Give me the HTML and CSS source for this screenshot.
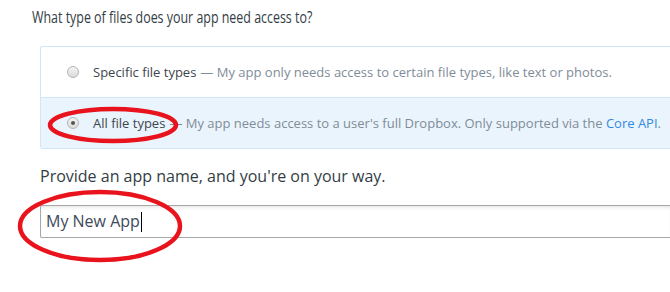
FILE: index.html
```html
<!DOCTYPE html>
<html lang="en">
<head>
  <meta charset="UTF-8" />
  <title>Create app</title>
  <link rel="stylesheet" href="styles.css">
</head>
<body>
  <div class="page">
    <h2 class="question">What type of files does your app need access to?</h2>
    <div class="choices">
      <label class="choice">
        <span class="radio"></span>
        <span class="name">Specific file types</span>
        <span class="desc">&mdash; My app only needs access to certain file types, like text or photos.</span>
      </label>
      <label class="choice selected">
        <span class="radio checked"></span>
        <span class="name">All file types</span>
        <span class="desc">&mdash; My app needs access to a user's full Dropbox. Only supported via the <a href="#">Core API</a>.</span>
      </label>
    </div>
    <h2 class="prompt">Provide an app name, and you're on your way.</h2>
    <div class="name-field">My New App<span class="caret"></span></div>

    <!-- hand drawn annotations -->
    <svg class="mark mark-radio" width="134" height="40" viewBox="0 0 134 40">
      <ellipse cx="66" cy="19" rx="63" ry="16" fill="none" stroke="#e8131c" stroke-width="4.5"/>
    </svg>
    <svg class="mark mark-input" width="170" height="76" viewBox="0 0 170 76">
      <ellipse cx="84" cy="37" rx="80" ry="34" fill="none" stroke="#e8131c" stroke-width="4.5"/>
    </svg>
  </div>
</body>
</html>
```

FILE: styles.css
```css
body {
  margin: 0;
  background: #fff;
  font-family: "Open Sans", sans-serif;
  color: #3d464d;
}
.page {
  position: relative;
  box-sizing: border-box;
  width: 670px;
  height: 292px;
  overflow: hidden;
  padding: 6px 0 0 40px;
}
.question {
  margin: 0 0 18px -8px;
  font-size: 16.5px;
  font-weight: normal;
  line-height: 22px;
  white-space: nowrap;
  transform: scaleX(0.753);
  transform-origin: left center;
  color: #333d45;
}
.choices {
  border: 1px solid #d3e6f8;
  border-right: none;
  border-radius: 3px 0 0 3px;
}
.choice {
  display: flex;
  align-items: center;
  height: 50px;
  padding-left: 26px;
  font-size: 13px;
  white-space: nowrap;
}
.choice + .choice {
  border-top: 1px solid #d3e6f8;
}
.choice.selected {
  background: #eaf4fd;
}
.radio {
  width: 10px;
  height: 10px;
  border: 1px solid #b5b5b5;
  border-radius: 50%;
  background: linear-gradient(#f3f3f3, #dcdcdc);
  margin-right: 14px;
  position: relative;
}
.radio.checked::after {
  content: "";
  position: absolute;
  left: 3px;
  top: 3px;
  width: 4px;
  height: 4px;
  border-radius: 50%;
  background: #555;
}
.name {
  color: #3d464d;
  margin-right: 4px;
}
.desc {
  color: #7f8c97;
}
.desc a {
  color: #3189e0;
  text-decoration: none;
}
.prompt {
  margin: 16px 0 18px;
  font-size: 16px;
  font-weight: normal;
  line-height: 22px;
  color: #333d45;
}
.name-field {
  height: 31px;
  border: 1px solid #a8a8a8;
  border-right: none;
  border-radius: 2px 0 0 2px;
  box-shadow: inset 0 3px 4px -2px rgba(0, 0, 0, 0.12);
  padding-left: 5px;
  font-size: 16px;
  line-height: 31px;
  color: #3d4a5a;
  display: flex;
  align-items: center;
}
.caret {
  display: inline-block;
  width: 1px;
  height: 20px;
  background: #000;
  margin-left: 1px;
}
.mark {
  position: absolute;
}
.mark-radio {
  left: 47px;
  top: 106px;
}
.mark-input {
  left: 16px;
  top: 189px;
}
```
